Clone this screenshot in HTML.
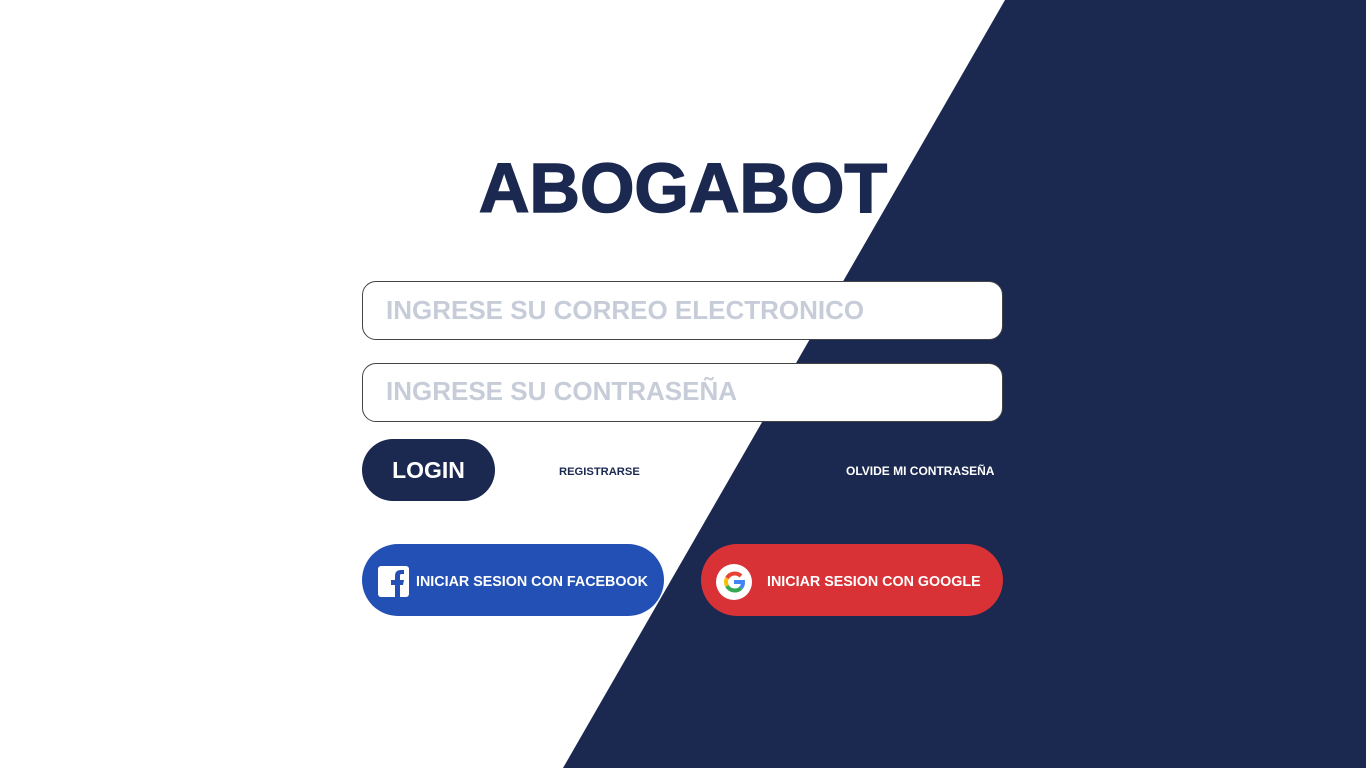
<!DOCTYPE html>
<html><head><meta charset="utf-8"><style>
*{margin:0;padding:0;box-sizing:border-box}
body{width:1366px;height:768px;overflow:hidden;background:#fff;position:relative;font-family:"Liberation Sans",sans-serif;font-weight:bold}
.bg{position:absolute;left:0;top:0}
.t{position:absolute;left:0;width:1366px;text-align:center;top:146px;font-size:70px;color:#1b2850;letter-spacing:0px;line-height:84px;-webkit-text-stroke:1.5px #1b2850}
.in{position:absolute;left:362px;width:641px;height:59px;border:1px solid #444;border-radius:14px;background:#fff;color:#c7ccd9;font-size:26px;padding-left:23px;line-height:57px}
.login{position:absolute;left:362px;top:439px;width:133px;height:62px;border-radius:31px;background:#1b2850;color:#fff;font-size:23px;text-align:center;line-height:62px}
.lk{position:absolute;top:464px;font-size:11.2px;line-height:16px}
.btn{position:absolute;top:544px;height:72px;border-radius:36px;color:#fff;font-size:14.3px;line-height:76px}
</style></head><body>
<svg class="bg" width="1366" height="768"><polygon points="1005,0 1366,0 1366,768 563,768" fill="#1b2850"/></svg>
<div class="t">ABOGABOT</div>
<div class="in" style="top:281px">INGRESE SU CORREO ELECTRONICO</div>
<div class="in" style="top:363px;line-height:54px">INGRESE SU CONTRASEÑA</div>
<div class="login">LOGIN</div>
<div class="lk" style="left:559px;color:#1b2850">REGISTRARSE</div>
<div class="lk" style="left:846px;color:#fff;font-size:12px;top:463px">OLVIDE MI CONTRASEÑA</div>
<div class="btn" style="left:362px;width:302px;background:#2350b5">
<svg style="position:absolute;left:16px;top:22px" width="31" height="31" viewBox="0 0 31 31"><rect width="31" height="31" rx="3" fill="#fff"/><path d="M17 31V19h-4v-5h4v-4c0-4 2-6 6-6h3v4h-2c-2 0-2 1-2 2v4h4l-1 5h-3v12z" fill="#2350b5"/></svg>
<span style="position:absolute;left:54px">INICIAR SESION CON FACEBOOK</span></div>
<div class="btn" style="left:701px;width:302px;background:#d93236">
<svg style="position:absolute;left:15px;top:20px" width="36" height="36" viewBox="0 0 36 36"><circle cx="18" cy="18" r="18" fill="#fff"/>
<g fill="none" stroke-width="4"><path d="M25 12a9 9 0 0 0-14 2" stroke="#ea4335"/><path d="M11 14a9 9 0 0 0 0 8" stroke="#fbbc05"/><path d="M11 22a9 9 0 0 0 14 2" stroke="#34a853"/><path d="M25 24a9 9 0 0 0 2-6H18" stroke="#4285f4"/></g></svg>
<span style="position:absolute;left:66px">INICIAR SESION CON GOOGLE</span></div>
</body></html>
